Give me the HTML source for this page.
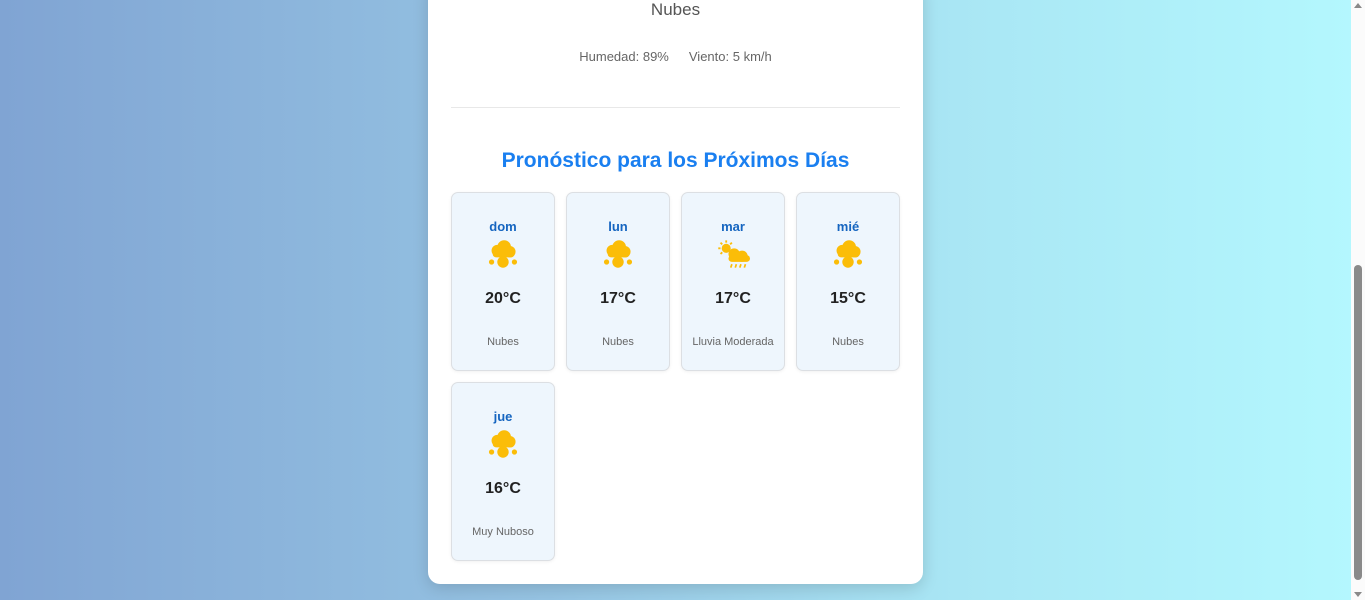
<!DOCTYPE html>
<html><head><meta charset="utf-8"><style>
*{margin:0;padding:0;box-sizing:border-box}
html,body{width:1365px;height:600px;overflow:hidden}
body{font-family:"Liberation Sans","DejaVu Sans",sans-serif;background:linear-gradient(90deg,#80a4d3 0%,#96c4e3 40%,#a9e6f4 70%,#b4f8fe 100%);position:relative}
.card{position:absolute;left:428px;top:-20px;width:495px;height:604px;background:#fff;border-radius:12px;box-shadow:0 4px 16px rgba(0,0,0,.15)}
.desc{position:absolute;top:0;text-align:center;font-size:17px;color:#555}
.meta{position:absolute;top:49px;text-align:center;font-size:13px;color:#666}
.meta span{margin:0 10px}
.hr{position:absolute;left:451px;top:107px;width:449px;height:1px;background:#e8e8e8}
h2{position:absolute;top:149px;left:428px;width:495px;text-align:center;font-size:21px;color:#1a7ff0;font-weight:bold}
.f{position:absolute;width:104px;height:179px;background:#eef6fd;border:1px solid #dcdfe3;border-radius:7px;text-align:center;box-shadow:0 1px 3px rgba(0,0,0,.06)}
.f .d{position:absolute;top:26px;width:100%;font-size:13px;font-weight:bold;color:#1565c0}
.f svg{position:absolute;top:46px;left:36px}
.f .t{position:absolute;top:97px;width:100%;font-size:16px;font-weight:bold;color:#222}
.f .s{position:absolute;top:143px;width:100%;font-size:11px;color:#666}
.sb{position:absolute;right:0;top:0;width:14px;height:600px;background:#fbfbfb}
.th{position:absolute;right:3px;top:265px;width:8px;height:315px;background:#8a8a8a;border-radius:4px}
</style></head><body>
<div class="card"></div>
<div class="desc" style="left:428px;width:495px;top:0">Nubes</div>
<div class="meta" style="left:428px;width:495px"><span>Humedad: 89%</span><span>Viento: 5 km/h</span></div>
<div class="hr"></div>
<h2>Pronóstico para los Próximos Días</h2>
<svg width="0" height="0" style="position:absolute"><defs>
<g id="c" fill="#fbbd08"><circle cx="9" cy="10" r="5"/><circle cx="15" cy="7" r="6"/><circle cx="20" cy="11" r="5"/><rect x="5" y="10" width="19" height="6" rx="3"/><circle cx="14" cy="20" r="5"/><circle cx="4" cy="20" r="2.3"/><circle cx="24" cy="20" r="2.3"/></g>
<g id="r" fill="#fbbd08"><circle cx="9" cy="8" r="4"/><path d="M9 1v2M2 8h2M4 3l1.5 1.5M14 3l-1.5 1.5M4 13l1.5-1.5" stroke="#fbbd08" stroke-width="1.6"/><circle cx="16" cy="13" r="5"/><circle cx="23" cy="15" r="5"/><rect x="11" y="14" width="19" height="6" rx="3"/><path d="M14 22l-1 3M18 22l-1 3M22 22l-1 3M26 22l-1 3" stroke="#fbbd08" stroke-width="1.5"/></g>
</defs></svg>
<div class="f" style="left:451px;top:192px"><div class="d">dom</div><svg width="32" height="30" viewBox="0 0 28 26" style="left:35px"><use href="#c"/></svg><div class="t">20°C</div><div class="s">Nubes</div></div>
<div class="f" style="left:566px;top:192px"><div class="d">lun</div><svg width="32" height="30" viewBox="0 0 28 26" style="left:35px"><use href="#c"/></svg><div class="t">17°C</div><div class="s">Nubes</div></div>
<div class="f" style="left:681px;top:192px"><div class="d">mar</div><svg width="34" height="30" viewBox="0 0 30 26" style="left:34px"><use href="#r"/></svg><div class="t">17°C</div><div class="s">Lluvia Moderada</div></div>
<div class="f" style="left:796px;top:192px"><div class="d">mié</div><svg width="32" height="30" viewBox="0 0 28 26" style="left:35px"><use href="#c"/></svg><div class="t">15°C</div><div class="s">Nubes</div></div>
<div class="f" style="left:451px;top:382px"><div class="d">jue</div><svg width="32" height="30" viewBox="0 0 28 26" style="left:35px"><use href="#c"/></svg><div class="t">16°C</div><div class="s">Muy Nuboso</div></div>
<div class="sb"><div style="position:absolute;left:3px;top:3px;border:4px solid transparent;border-bottom:5px solid #8a8a8a;border-top:0"></div><div class="th"></div><div style="position:absolute;left:3px;bottom:3px;border:4px solid transparent;border-top:5px solid #8a8a8a;border-bottom:0"></div></div>
</body></html>
